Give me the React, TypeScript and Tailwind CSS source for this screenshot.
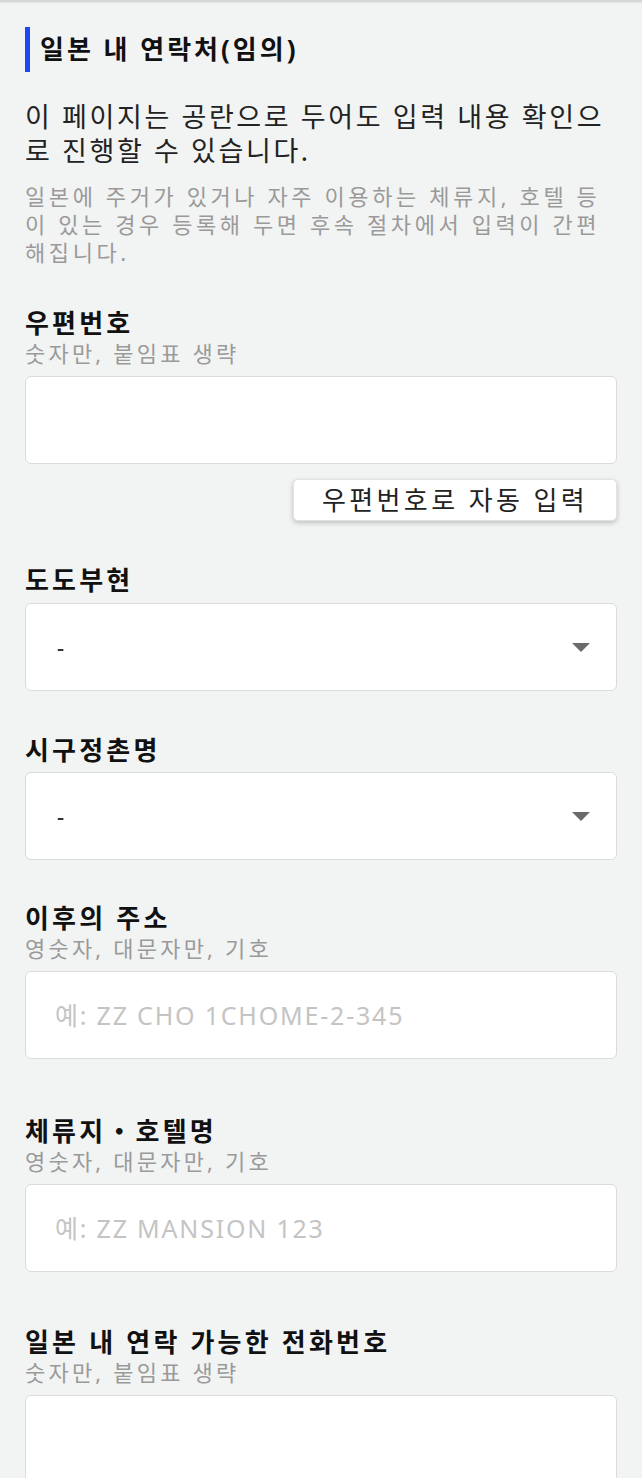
const font = { fontFamily: '"Noto Sans", "Noto Sans CJK KR", sans-serif' };

function Label({ text, hint }: { text: string; hint?: string }) {
  return (
    <div>
      <p className="text-[26px] leading-[34px] font-bold text-[#111] tracking-[3.2px]">{text}</p>
      {hint && <p className="text-[22px] leading-[27px] text-[#9a9a9a] tracking-[3.2px]">{hint}</p>}
    </div>
  );
}

function TextBox({ placeholder }: { placeholder?: string }) {
  return (
    <input
      type="text"
      placeholder={placeholder}
      className="block w-full h-[88px] rounded-[6px] border border-[#dadcdc] bg-white px-[29px] text-[25px] tracking-[1.8px] text-[#222] placeholder:text-[#c4c4c4] outline-none"
    />
  );
}

function SelectBox() {
  return (
    <div className="flex h-[88px] w-full items-center justify-between rounded-[6px] border border-[#dadcdc] bg-white pl-[31px] pr-[26px]">
      <span className="text-[22px] font-medium text-[#333]">-</span>
      <svg width="18" height="9" viewBox="0 0 18 9" aria-hidden>
        <path d="M0 0h18L9 9z" fill="#6b6b6b" />
      </svg>
    </div>
  );
}

export default function App() {
  return (
    <div className="min-h-screen bg-[#f2f3f3]" style={font}>
      <div className="h-[2px] bg-[#d6d8d8] shadow-[0_1px_2px_rgba(0,0,0,0.08)]" />
      <div className="px-[25px] pt-[25px] pb-10">
        <h2 className="flex h-[45px] items-center border-l-[5px] border-[#1a48f2] pl-[10px] text-[26px] font-bold text-[#111] tracking-[3px]">
          일본 내 연락처(임의)
        </h2>

        <p className="mt-[28px] whitespace-nowrap text-[27px] leading-[34px] text-[#222] tracking-[2.6px]">
          이 페이지는 공란으로 두어도 입력 내용 확인으
          <br />로 진행할 수 있습니다.
        </p>
        <p className="mt-[14px] whitespace-nowrap text-[22px] leading-[28px] text-[#9a9a9a] tracking-[3.6px]">
          일본에 주거가 있거나 자주 이용하는 체류지, 호텔 등
          <br />이 있는 경우 등록해 두면 후속 절차에서 입력이 간편
          <br />해집니다.
        </p>

        <div className="mt-[40px]">
          <Label text="우편번호" hint="숫자만, 붙임표 생략" />
          <div className="mt-[9px]">
            <TextBox />
          </div>
          <div className="mt-[15px] flex justify-end">
            <button
              type="button"
              className="h-[42px] w-[324px] rounded-[5px] border border-[#e2e2e2] bg-white text-[26px] leading-none text-[#222] tracking-[3.4px] shadow-[0_2px_5px_rgba(0,0,0,0.22)]"
            >
              우편번호로 자동 입력
            </button>
          </div>
        </div>

        <div className="mt-[42px]">
          <Label text="도도부현" />
          <div className="mt-[6px]">
            <SelectBox />
          </div>
        </div>

        <div className="mt-[42px]">
          <Label text="시구정촌명" />
          <div className="mt-[5px]">
            <SelectBox />
          </div>
        </div>

        <div className="mt-[41px]">
          <Label text="이후의 주소" hint="영숫자, 대문자만, 기호" />
          <div className="mt-[9px]">
            <TextBox placeholder="예: ZZ CHO 1CHOME-2-345" />
          </div>
        </div>

        <div className="mt-[55px]">
          <Label text="체류지・호텔명" hint="영숫자, 대문자만, 기호" />
          <div className="mt-[9px]">
            <TextBox placeholder="예: ZZ MANSION 123" />
          </div>
        </div>

        <div className="mt-[53px]">
          <Label text="일본 내 연락 가능한 전화번호" hint="숫자만, 붙임표 생략" />
          <div className="mt-[9px]">
            <TextBox />
          </div>
        </div>
      </div>
    </div>
  );
}
